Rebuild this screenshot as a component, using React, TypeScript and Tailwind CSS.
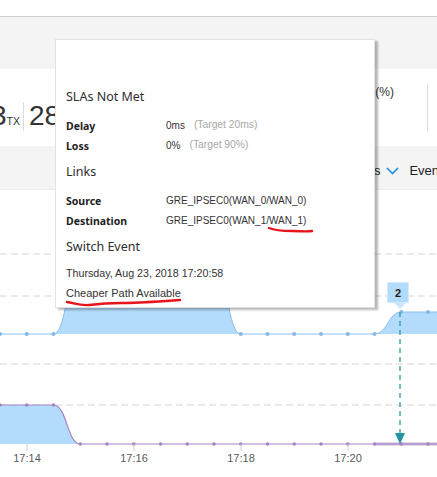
const STEP = 26.75;
const xs = Array.from({ length: 17 }, (_, i) => i * STEP);

// chart coordinates are relative to the chart svg (page y - 190)
const BLUE_BASE = 144;
const PURPLE_BASE = 254;

function blueY(i: number) {
  if (i >= 3 && i <= 8) return 76;
  if (i >= 15) return 122;
  return BLUE_BASE;
}

function purpleY(i: number) {
  return i <= 2 ? 215 : PURPLE_BASE;
}

const blueLine =
  "M0,144 L53.5,144 C67,144 67,76 80.25,76 L214,76 C227.4,76 227.4,144 240.75,144 L374.5,144 C388,144 388,122 401.25,122 L437,122";
const purpleLine = "M0,215 L53.5,215 C67,215 67,254 80.25,254 L437,254";

function Chart() {
  const ticks = [
    { x: 27, label: "17:14" },
    { x: 134, label: "17:16" },
    { x: 241, label: "17:18" },
    { x: 348, label: "17:20" },
  ];
  return (
    <svg width="437" height="287" viewBox="0 0 437 287" className="block">
      {/* grid */}
      {[64, 106, 174, 215].map((y) => (
        <line key={y} x1="0" x2="437" y1={y} y2={y} stroke="#d4d4d4" strokeDasharray="7 4" />
      ))}

      {/* blue series */}
      <path d={`${blueLine} L437,144 L0,144 Z`} fill="#b3dbfb" />
      <path d={blueLine} fill="none" stroke="#8bbfe9" strokeWidth="1" />
      {xs.map((x, i) => (
        <circle key={`b${i}`} cx={x} cy={blueY(i)} r="2" fill="#86b9e6" />
      ))}

      {/* purple series */}
      <path d={`${purpleLine} L0,254 Z`} fill="#b3dbfb" />
      <line x1="375" x2="437" y1="254" y2="254" stroke="#c9b6dc" strokeWidth="3" />
      <path d={purpleLine} fill="none" stroke="#a884c2" strokeWidth="1.2" />
      {xs.map((x, i) => (
        <circle key={`p${i}`} cx={x} cy={purpleY(i)} r="1.7" fill="#a680c0" />
      ))}

      {/* x axis */}
      {ticks.map((t) => (
        <g key={t.label}>
          <line x1={t.x} x2={t.x} y1="254" y2="261" stroke="#cfcfcf" />
          <text
            x={t.x}
            y="272"
            textAnchor="middle"
            fontSize="11"
            fill="#5a5a5a"
            fontFamily="'Liberation Sans', Arial, sans-serif"
          >
            {t.label}
          </text>
        </g>
      ))}

      {/* switch event marker */}
      <line x1="400" x2="400" y1="113" y2="244" stroke="#2a99a6" strokeWidth="1.3" strokeDasharray="5 4" />
      <polygon points="395,243 405,243 400,254" fill="#22939f" />
      <rect x="387.5" y="92.5" width="21" height="20" fill="#b3dbfb" stroke="#d2ebfd" />
      <polygon points="394,113 406,113 400,119" fill="#cbe6fc" />
      <text
        x="398"
        y="106.5"
        textAnchor="middle"
        fontSize="11"
        fontWeight="bold"
        fill="#1d1d1d"
        fontFamily="'Liberation Sans', Arial, sans-serif"
      >
        2
      </text>
    </svg>
  );
}

function Row({ label, children }: { label: string; children: React.ReactNode }) {
  return (
    <div className="flex h-5 items-center">
      <div className="w-[100px] pt-[3px] font-['Noto_Sans',sans-serif] text-[10.5px] font-bold text-[#222]">
        {label}
      </div>
      <div className="flex items-center text-[10px] text-[#333]">{children}</div>
    </div>
  );
}

function Heading({ children, className = "" }: { children: React.ReactNode; className?: string }) {
  return (
    <div className={`flex h-5 items-center font-['Noto_Sans',sans-serif] text-[12.5px] text-[#2e2e2e] ${className}`}>
      {children}
    </div>
  );
}

function Tooltip() {
  return (
    <div className="absolute left-[55px] top-[39px] h-[269px] w-[320px] border border-[#e2e2e2] bg-white pl-[10px] pt-[47px] shadow-[3px_2px_2px_rgba(0,0,0,0.28)]">
      <Heading>SLAs Not Met</Heading>
      <div className="mt-[8px]">
        <Row label="Delay">
          <span>0ms</span>
          <span className="ml-[9px] text-[10.3px] text-[#a8a8a8]">(Target 20ms)</span>
        </Row>
        <Row label="Loss">
          <span>0%</span>
          <span className="ml-[9px] text-[10.3px] text-[#a8a8a8]">(Target 90%)</span>
        </Row>
      </div>
      <Heading className="mt-[7px]">Links</Heading>
      <div className="mt-[8px]">
        <Row label="Source">GRE_IPSEC0(WAN_0/WAN_0)</Row>
        <Row label="Destination">GRE_IPSEC0(WAN_1/WAN_1)</Row>
      </div>
      <Heading className="mt-[7px]">Switch Event</Heading>
      <div className="mt-[6px] flex h-5 items-center text-[10.7px] text-[#333]">Thursday, Aug 23, 2018 17:20:58</div>
      <div className="flex h-5 items-center text-[11px] text-[#333]">Cheaper Path Available</div>

      {/* hand-drawn annotation marks */}
      <svg className="pointer-events-none absolute left-0 top-0" width="320" height="269">
        <path
          d="M213,188 C220,191 228,191 236,191 S250,192 256,191"
          fill="none"
          stroke="#e8141c"
          strokeWidth="2.4"
          strokeLinecap="round"
        />
        <path
          d="M11,262 C18,263 25,266 33,265 S50,263 65,263 S95,262 110,261 L124,260"
          fill="none"
          stroke="#e8141c"
          strokeWidth="2.4"
          strokeLinecap="round"
        />
      </svg>
    </div>
  );
}

export default function App() {
  return (
    <div className="relative h-[477px] w-[437px] overflow-hidden bg-white font-['Liberation_Sans',Arial,sans-serif] text-[#333]">
      {/* top bar */}
      <div className="h-[17px] border-b border-[#cfcfcf] bg-white" />
      <div className="h-[52px] bg-[#f4f4f4]" />

      {/* stats row */}
      <div className="flex h-[77px] bg-white">
        <div className="flex items-start pt-[33px]">
          <div className="-ml-[9px] flex items-baseline">
            <span className="text-[28px] leading-none">3</span>
            <span className="text-[10.5px] leading-none">TX</span>
          </div>
          <div className="ml-[3px] h-[29px] w-px bg-[#dcdcdc]" />
          <span className="ml-[5px] text-[28px] leading-none">28</span>
        </div>
        <div className="ml-auto flex items-start pt-[15px] pr-[9px]">
          <span className="mt-[2px] text-[12px] leading-none whitespace-nowrap">Loss (%)</span>
          <div className="ml-[33px] h-[47px] w-px bg-[#dcdcdc]" />
        </div>
      </div>

      {/* filters row */}
      <div className="flex h-[44px] items-center whitespace-nowrap border-b border-[#ececec] bg-[#f4f4f4] pl-[340px] pt-[6px] text-[13px] text-[#222]">
        <span className="shrink-0">Alarms</span>
        <svg className="ml-[6px] shrink-0" width="13" height="8" viewBox="0 0 13 8">
          <path d="M1,1 L6.5,6.5 L12,1" fill="none" stroke="#1e8fe0" strokeWidth="1.6" />
        </svg>
        <span className="ml-[10px] shrink-0">Events</span>
      </div>

      <Chart />
      <Tooltip />
    </div>
  );
}
